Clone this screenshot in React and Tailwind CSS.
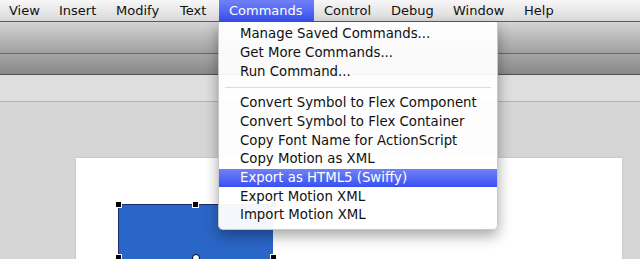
import React from 'react';

const menus = [
  { label: 'View', cls: 'w-[49px] pl-[9px]' },
  { label: 'Insert', cls: 'w-[57px] pl-[10px]' },
  { label: 'Modify', cls: 'w-[64px] pl-[10px]' },
  { label: 'Text', cls: 'w-[49px] pl-[10px]' },
  { label: 'Commands', cls: 'w-[95px] pl-[10px]', active: true },
  { label: 'Control', cls: 'w-[67px] pl-[10px]' },
  { label: 'Debug', cls: 'w-[62px] pl-[10px]' },
  { label: 'Window', cls: 'w-[71px] pl-[10px]' },
  { label: 'Help', cls: 'w-[60px] pl-[10px]' },
];

const groupA = ['Manage Saved Commands...', 'Get More Commands...', 'Run Command...'];
const groupB = [
  'Convert Symbol to Flex Component',
  'Convert Symbol to Flex Container',
  'Copy Font Name for ActionScript',
  'Copy Motion as XML',
  'Export as HTML5 (Swiffy)',
  'Export Motion XML',
  'Import Motion XML',
];

const MenuRow = ({ label }) => {
  const hot = label === 'Export as HTML5 (Swiffy)';
  return (
    <div
      className={
        hot
          ? 'h-[18.67px] pl-[21px] flex items-center text-white bg-gradient-to-b from-[#7180f6] to-[#3a4ff0]'
          : 'h-[18.67px] pl-[21px] flex items-center text-[#111]'
      }
    >
      {label}
    </div>
  );
};

const Handle = ({ className }) => (
  <div className={`absolute w-[7px] h-[7px] bg-black border border-white ${className}`} />
);

export default function App() {
  return (
    <div
      className="relative w-[640px] h-[259px] overflow-hidden bg-[#d6d6d6] text-[13px]"
      style={{ fontFamily: '"DejaVu Sans", "Liberation Sans", sans-serif' }}
    >
      {/* menu bar */}
      <div className="flex h-[22px] bg-gradient-to-b from-[#f7f7f7] to-[#d9d9d9] border-b border-[#5a5a5a]">
        {menus.map((m) => (
          <div
            key={m.label}
            className={
              m.active
                ? `${m.cls} flex items-center text-white bg-gradient-to-b from-[#7180f6] to-[#3a4ff0]`
                : `${m.cls} flex items-center text-[#111]`
            }
          >
            {m.label}
          </div>
        ))}
      </div>

      {/* toolbar strips */}
      <div className="h-[32px] bg-gradient-to-b from-[#d4d4d4] to-[#a0a0a0] border-b border-[#686868]" />
      <div className="h-[21px] bg-gradient-to-b from-[#a6a6a6] to-[#888888] border-b border-[#505050]" />
      <div className="h-[27px] bg-[#dedede] border-b border-[#b2b2b2]" />

      {/* canvas */}
      <div className="pl-[76px] pt-[56px] pr-[18px]">
        <div className="bg-white h-[110px] shadow-[0_0_2px_rgba(0,0,0,0.15)] pl-[42px] pt-[46px]">
          <div className="relative w-[155px] h-[60px] bg-[#2a66c7] border-t border-l border-[#1f2a6b]">
            <Handle className="-left-[4px] -top-[4px]" />
            <Handle className="left-[73px] -top-[4px]" />
            <Handle className="-right-[4px] -top-[4px]" />
            <Handle className="-left-[4px] top-[49px]" />
            <Handle className="-right-[4px] top-[49px]" />
            <div className="absolute left-[73px] top-[49px] w-[8px] h-[8px] rounded-full bg-white border border-black" />
          </div>
        </div>
      </div>

      {/* dropdown */}
      <div className="absolute left-[218px] top-[22px] w-[280px] pt-[3px] pb-[4px] text-[13.3px] bg-white/95 rounded-b-[5px] border-x border-b border-[#c8c8c8] shadow-[0_6px_14px_rgba(0,0,0,0.35)]">
        {groupA.map((l) => (
          <MenuRow key={l} label={l} />
        ))}
        <div className="mx-[6px] my-[6px] h-px bg-[#dcdcdc]" />
        {groupB.map((l) => (
          <MenuRow key={l} label={l} />
        ))}
      </div>
    </div>
  );
}
